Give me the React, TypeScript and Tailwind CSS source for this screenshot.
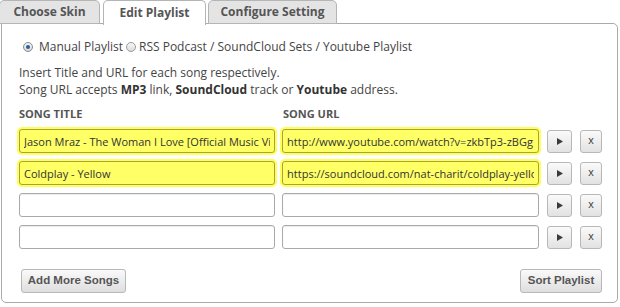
import React from "react";

const rows = [
  { title: "Jason Mraz - The Woman I Love [Official Music Video]", url: "http://www.youtube.com/watch?v=zkbTp3-zBGg", hl: true },
  { title: "Coldplay - Yellow", url: "https://soundcloud.com/nat-charit/coldplay-yellow", hl: true },
  { title: "", url: "", hl: false },
  { title: "", url: "", hl: false },
];

function Input({ value, hl, w }: { value: string; hl: boolean; w: string }) {
  return (
    <input
      readOnly
      value={value}
      className={
        "h-[24px] rounded-[3px] border px-[4px] outline-none text-[11px] text-[#333] " +
        w +
        (hl
          ? " bg-[#ffff66] border-[#a7a23f] shadow-[0_0_0_2px_#ffff55]"
          : " bg-white border-[#a9a9a9] shadow-[inset_0_1px_1px_rgba(0,0,0,0.08)]")
      }
      style={{ fontFamily: '"Open Sans", "Liberation Sans", sans-serif' }}
    />
  );
}

function SmallBtn({ children, w }: { children: React.ReactNode; w: string }) {
  return (
    <div
      className={
        "h-[23px] rounded-[3px] border border-[#b8b8b8] bg-gradient-to-b from-[#fafafa] to-[#e2e2e2] flex items-center justify-center " +
        w
      }
    >
      {children}
    </div>
  );
}

export default function App() {
  return (
    <div
      className="w-[620px] h-[307px] bg-white text-[#444] overflow-hidden"
      style={{ fontFamily: '"Open Sans", "Liberation Sans", sans-serif' }}
    >
      {/* Tabs */}
      <div className="flex h-[24px] items-end relative z-10">
        <div className="w-[101px] h-[24px] ml-[-1px] rounded-t-[5px] border border-[#b5b5b5] bg-[#e4e4e4] flex items-center justify-center text-[12px] font-bold text-[#555]">
          Choose Skin
        </div>
        <div className="w-[103px] h-[25px] ml-[3px] rounded-t-[5px] border border-b-0 border-[#b5b5b5] bg-white flex items-center justify-center text-[12px] font-bold text-[#555] self-start">
          Edit Playlist
        </div>
        <div className="w-[129px] h-[24px] ml-[2px] rounded-t-[5px] border border-[#b5b5b5] bg-[#e4e4e4] flex items-center justify-center text-[12px] font-bold text-[#555]">
          Configure Setting
        </div>
      </div>
      {/* Panel */}
      <div className="ml-[1px] mr-[2px] mt-[-1px] h-[280px] border border-[#aaaaaa] rounded-b-[5px] rounded-tr-[5px] pl-[17px] pr-[15px] pt-[15px]">
        <div className="flex items-center h-[16px] text-[12px] text-[#444]">
          <span className="w-[10px] h-[10px] ml-[4px] rounded-full border border-[#8a8a8a] bg-gradient-to-b from-[#f4f4f4] to-[#d8d8d8] flex items-center justify-center">
            <span className="w-[4px] h-[4px] rounded-full bg-[#2b5f9a]" />
          </span>
          <span className="ml-[6px]">Manual Playlist</span>
          <span className="w-[10px] h-[10px] ml-[3px] rounded-full border border-[#9a9a9a] bg-gradient-to-b from-[#f8f8f8] to-[#dcdcdc]" />
          <span className="ml-[3px]">RSS Podcast / SoundCloud Sets / Youtube Playlist</span>
        </div>
        <div className="mt-[9px] text-[12px] leading-[17px] text-[#444]">
          <div>Insert Title and URL for each song respectively.</div>
          <div>
            Song URL accepts <b className="text-[#333]">MP3</b> link, <b className="text-[#333]">SoundCloud</b> track or{" "}
            <b className="text-[#333]">Youtube</b> address.
          </div>
        </div>
        <div className="mt-[8px] flex text-[11px] font-bold text-[#555] h-[16px] items-center">
          <div className="w-[264px]">SONG TITLE</div>
          <div>SONG URL</div>
        </div>
        <div className="mt-[7px] flex flex-col gap-[8px]">
          {rows.map((r, i) => (
            <div key={i} className="flex items-center">
              <Input value={r.title} hl={r.hl} w="w-[257px]" />
              <div className="w-[7px]" />
              <Input value={r.url} hl={r.hl} w="w-[258px]" />
              <div className="w-[8px]" />
              <SmallBtn w="w-[25px]">
                <svg width="6" height="7" viewBox="0 0 6 7">
                  <path d="M0 0 L6 3.5 L0 7 Z" fill="#3a3a3a" />
                </svg>
              </SmallBtn>
              <div className="w-[8px]" />
              <SmallBtn w="w-[22px]">
                <span className="text-[11px] text-[#444] leading-none mt-[-2px]" style={{ fontFamily: '"Liberation Sans", sans-serif' }}>
                  x
                </span>
              </SmallBtn>
            </div>
          ))}
        </div>
        <div className="mt-[20px] flex justify-between pl-[2px]" style={{ fontFamily: '"Liberation Sans", sans-serif' }}>
          <div className="w-[105px] h-[24px] rounded-[3px] border border-[#b8b8b8] bg-gradient-to-b from-[#fafafa] to-[#dedede] flex items-center justify-center text-[11.5px] font-bold text-[#555]">
            Add More Songs
          </div>
          <div className="w-[82px] h-[24px] rounded-[3px] border border-[#b8b8b8] bg-gradient-to-b from-[#fafafa] to-[#dedede] flex items-center justify-center text-[11.5px] font-bold text-[#555]">
            Sort Playlist
          </div>
        </div>
      </div>
    </div>
  );
}
